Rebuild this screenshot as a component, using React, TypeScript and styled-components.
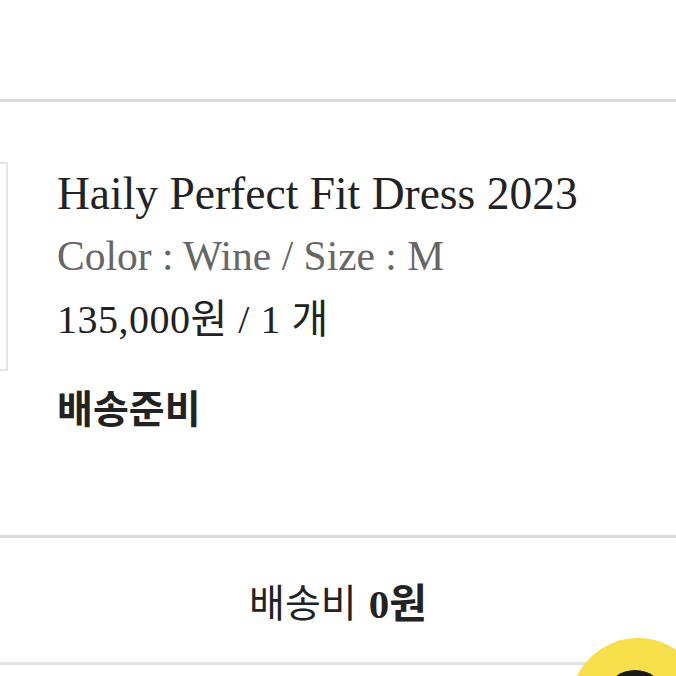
import React from 'react'
import styled, { createGlobalStyle } from 'styled-components'

const Global = createGlobalStyle`
  html, body {
    margin: 0;
    padding: 0;
    background: #fff;
    overflow: hidden;
  }
`

const serif = `"Liberation Serif", "Noto Sans CJK KR", serif`
const sans = `"Noto Sans CJK KR", "Noto Sans", sans-serif`

export default function App() {
  return (
    <>
      <Global />
      <Page>
        <TopSpace />
        <Divider />
        <OrderItem>
          <Row>
            <Thumb />
            <Info>
              <Title>Haily Perfect Fit Dress 2023</Title>
              <Option>Color : Wine / Size : M</Option>
              <Price>135,000원 / 1 개</Price>
            </Info>
          </Row>
          <Status>배송준비</Status>
        </OrderItem>
        <Divider />
        <Fee>
          배송비 <strong>0원</strong>
        </Fee>
        <Divider $light />
        <ChatButton aria-label="chat">
          <svg width="136" height="136" viewBox="0 0 136 136">
            <circle cx="68" cy="68" r="68" fill="#f8df4c" />
            <ellipse cx="65" cy="52" rx="26" ry="20" fill="#1a1a1a" />
          </svg>
        </ChatButton>
      </Page>
    </>
  )
}

const Page = styled.div`
  position: relative;
  width: 676px;
  height: 676px;
  overflow: hidden;
  background: #fff;
  color: #222;
`
const TopSpace = styled.div`
  height: 99px;
`
const Divider = styled.div<{ $light?: boolean }>`
  height: 3px;
  background: ${p => (p.$light ? '#e4e4e4' : '#dadada')};
`
const OrderItem = styled.section`
  padding: 60px 0 0;
  height: 433px;
  box-sizing: border-box;
`
const Row = styled.div`
  display: flex;
  align-items: flex-start;
  gap: 49px;
`
const Thumb = styled.div`
  flex: none;
  width: 6px;
  height: 205px;
  border: 2px solid #e6e6e6;
  border-left: none;
`
const Info = styled.div`
  display: flex;
  flex-direction: column;
  font-family: ${serif};
  padding-top: 0;
`
const Title = styled.div`
  font-size: 45.5px;
  line-height: 63px;
  color: #222;
  white-space: nowrap;
`
const Option = styled.div`
  font-size: 41.5px;
  line-height: 63px;
  color: #666;
`
const Price = styled.div`
  font-size: 40px;
  line-height: 63px;
  color: #222;
  letter-spacing: 0.5px;
`
const Status = styled.div`
  margin: 8px 0 0 57px;
  font-family: ${sans};
  font-weight: 700;
  font-size: 39px;
  line-height: 54px;
  color: #222;
`
const Fee = styled.div`
  height: 124px;
  display: flex;
  align-items: center;
  justify-content: center;
  gap: 12px;
  font-family: ${sans};
  font-size: 39px;
  color: #222;
  & > strong {
    font-family: ${serif};
    font-weight: 700;
    font-size: 41px;
  }
`
const ChatButton = styled.div`
  position: absolute;
  left: 570px;
  top: 638px;
  width: 136px;
  height: 136px;
`
